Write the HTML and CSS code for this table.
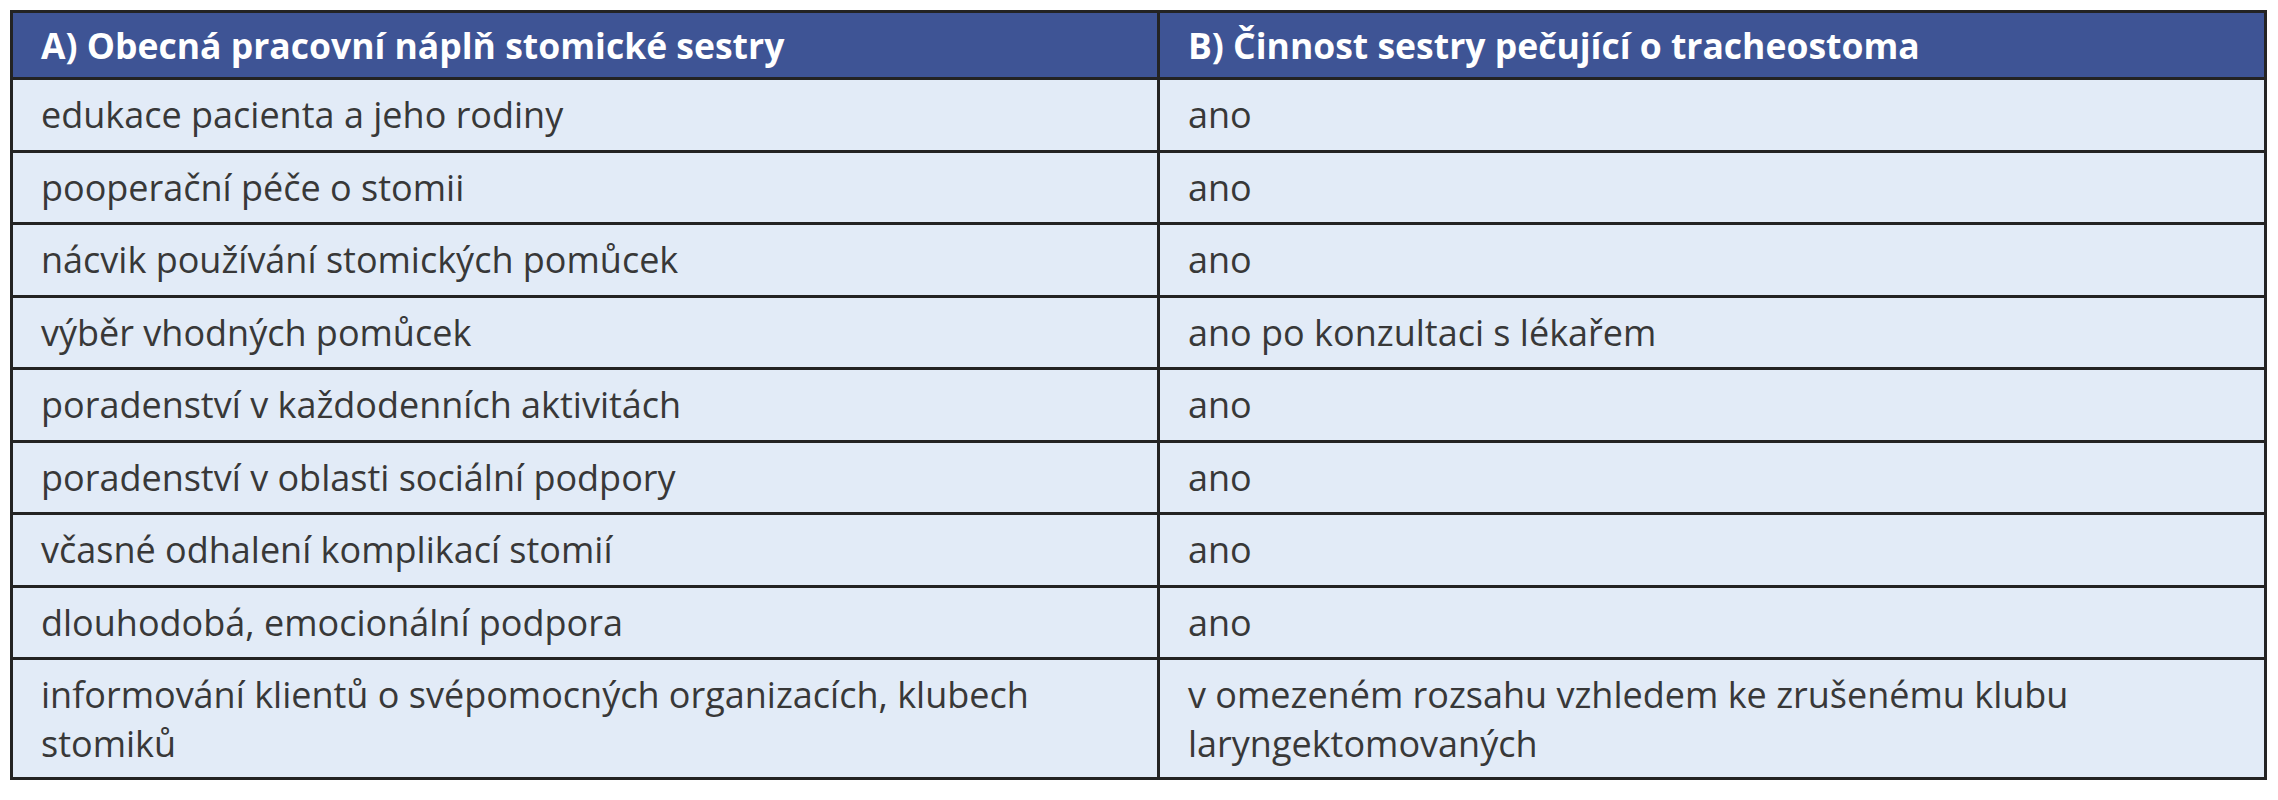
FILE: index.html
```html
<!DOCTYPE html>
<html lang="cs">
<head>
<meta charset="utf-8">
<title>Stomická sestra</title>
<link rel="stylesheet" href="styles.css">
</head>
<body>
<table class="care-table">
  <colgroup>
    <col class="col-a">
    <col class="col-b">
  </colgroup>
  <thead>
    <tr class="head-row">
      <th>A) Obecná pracovní náplň stomické sestry</th>
      <th>B) Činnost sestry pečující o tracheostoma</th>
    </tr>
  </thead>
  <tbody>
    <tr><td>edukace pacienta a jeho rodiny</td><td>ano</td></tr>
    <tr><td>pooperační péče o stomii</td><td>ano</td></tr>
    <tr><td>nácvik používání stomických pomůcek</td><td>ano</td></tr>
    <tr><td>výběr vhodných pomůcek</td><td>ano po konzultaci s lékařem</td></tr>
    <tr><td>poradenství v každodenních aktivitách</td><td>ano</td></tr>
    <tr><td>poradenství v oblasti sociální podpory</td><td>ano</td></tr>
    <tr><td>včasné odhalení komplikací stomií</td><td>ano</td></tr>
    <tr><td>dlouhodobá, emocionální podpora</td><td>ano</td></tr>
    <tr class="tall-row"><td>informování klientů o svépomocných organizacích, klubech stomiků</td><td>v omezeném rozsahu vzhledem ke zrušenému klubu laryngektomovaných</td></tr>
  </tbody>
</table>
</body>
</html>
```

FILE: styles.css
```css
html, body {
  margin: 0;
  padding: 0;
  background: #ffffff;
}

body {
  padding: 10px 0 0 10px;
  font-family: "Open Sans", "Noto Sans", sans-serif;
}

.care-table {
  border-collapse: collapse;
  width: 2257px;
  table-layout: fixed;
  border: 3px solid #232323;
}

.col-a { width: 1147px; }
.col-b { width: auto; }

.care-table th,
.care-table td {
  border: 3px solid #232323;
  text-align: left;
  vertical-align: middle;
  padding: 0 28px;
  font-size: 36px;
  line-height: 49px;
}

.care-table th {
  background: #3e5495;
  color: #ffffff;
  font-weight: 700;
  font-size: 35.5px;
  height: 64px;
}

.care-table td {
  background: #e2ebf7;
  color: #383838;
  height: 69.5px;
}

.care-table .tall-row td {
  height: 117px;
  padding-right: 120px;
}
```
